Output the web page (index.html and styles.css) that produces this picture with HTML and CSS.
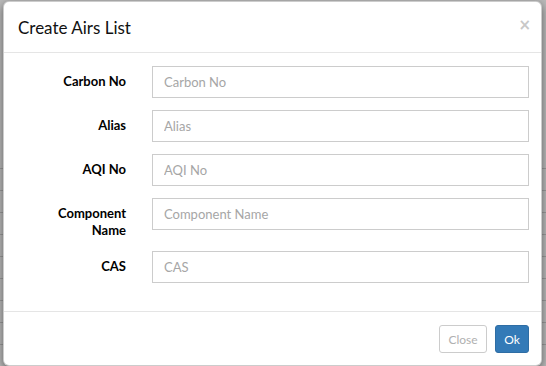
FILE: index.html
```html
<!DOCTYPE html>
<html lang="en">
<head>
    <meta charset="UTF-8">
    <title>Create Airs List</title>
    <link rel="stylesheet" href="styles.css">
</head>
<body>
    <div class="backdrop">
        <div class="modal">
            <div class="modal-header">
                <h4 class="modal-title">Create Airs List</h4>
                <button class="close" type="button">&times;</button>
            </div>

            <form class="modal-body">
                <div class="form-group">
                    <label for="carbonNo">Carbon No</label>
                    <input id="carbonNo" type="text" placeholder="Carbon No">
                </div>
                <div class="form-group">
                    <label for="alias">Alias</label>
                    <input id="alias" type="text" placeholder="Alias">
                </div>
                <div class="form-group">
                    <label for="aqiNo">AQI No</label>
                    <input id="aqiNo" type="text" placeholder="AQI No">
                </div>
                <div class="form-group">
                    <label for="componentName">Component Name</label>
                    <input id="componentName" type="text" placeholder="Component Name">
                </div>
                <div class="form-group">
                    <label for="cas">CAS</label>
                    <input id="cas" type="text" placeholder="CAS">
                </div>
            </form>

            <div class="modal-footer">
                <button class="btn btn-default" type="button">Close</button>
                <button class="btn btn-primary" type="button">Ok</button>
            </div>
        </div>
    </div>
</body>
</html>
```

FILE: styles.css
```css
* {
    margin: 0;
    padding: 0;
    box-sizing: border-box;
}

body {
    font-family: 'Lato', 'Open Sans', sans-serif;
    color: #000;
    background: #c4c4c4;
}

.backdrop {
    min-height: 366px;
    padding: 1px 4px 2px 3px;
    background-color: #b9b9b9;
    background-image: repeating-linear-gradient(to bottom, transparent 0, transparent 21px, #9a9a9a 21px, #9a9a9a 22px);
    background-position: 0 147px;
    background-repeat: repeat-x;
}

.modal {
    background: #fff;
    border: 1px solid rgba(0, 0, 0, 0.2);
    border-radius: 6px;
    box-shadow: 0 3px 9px rgba(0, 0, 0, 0.5);
}

.modal-header {
    display: flex;
    align-items: center;
    justify-content: space-between;
    height: 51px;
    padding: 0 15px 0 14px;
    border-bottom: 1px solid #e5e5e5;
}

.modal-title {
    font-size: 17px;
    font-weight: 400;
    color: #111;
    padding-top: 1px;
}

.close {
    background: none;
    border: none;
    font-family: 'DejaVu Sans', sans-serif;
    font-size: 15px;
    font-weight: bold;
    color: #c8c8c8;
    margin-top: -4px;
    margin-right: -5px;
}

.modal-body {
    display: flex;
    flex-direction: column;
    gap: 12px;
    padding: 13px 12px 28px 15px;
    border-bottom: 1px solid #e5e5e5;
}

.form-group {
    display: grid;
    grid-template-columns: 107px 1fr;
    column-gap: 26px;
    align-items: start;
}

.form-group label {
    text-align: right;
    font-size: 13px;
    font-weight: 700;
    line-height: 17px;
    padding-top: 7px;
    padding-left: 30px;
}

.form-group input {
    height: 32px;
    border: 1px solid #ccc;
    border-radius: 0;
    padding: 0 11px;
    font-family: inherit;
    font-size: 13px;
    color: #555;
    background: #fff;
}

.form-group input::placeholder {
    color: #a6a6a6;
}

.modal-footer {
    display: flex;
    justify-content: flex-end;
    gap: 8px;
    padding: 13px 12px 12px;
}

.btn {
    height: 28px;
    padding: 0 8px;
    font-family: inherit;
    font-size: 12px;
    border-radius: 3px;
    border: 1px solid transparent;
    cursor: pointer;
}

.btn-default {
    background: #fff;
    border-color: #ccc;
    color: #b0b0b0;
    width: 48px;
}

.btn-primary {
    background: #337ab7;
    border-color: #2e6da4;
    color: #fff;
    width: 34px;
}
```
